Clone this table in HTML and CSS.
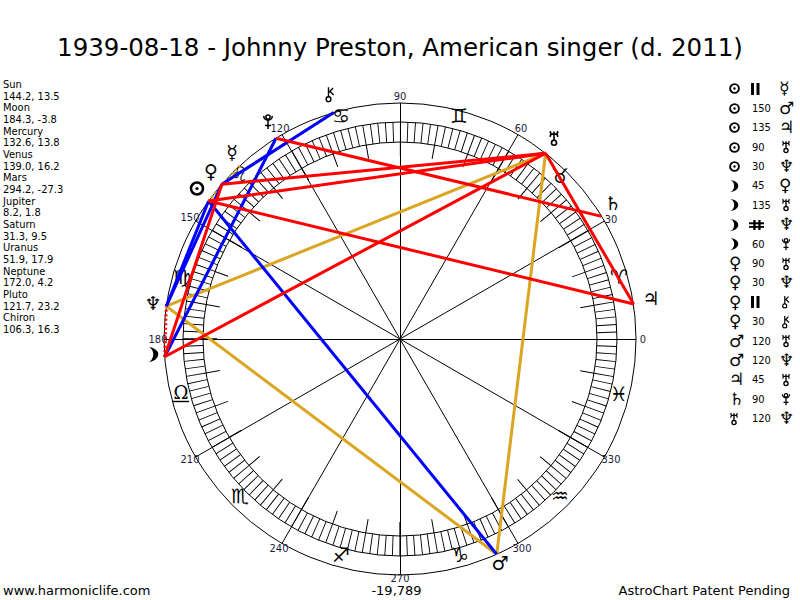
FILE: index.html
```html
<!DOCTYPE html>
<html>
<head>
<meta charset="utf-8">
<title>1939-08-18 - Johnny Preston</title>
<link rel="stylesheet" href="styles.css">
</head>
<body>
<div class="page">
  <h1 class="title">1939-08-18 - Johnny Preston, American singer (d. 2011)</h1>
  <div class="main">
    <div class="positions">
      <div>Sun</div><div>144.2, 13.5</div>
      <div>Moon</div><div>184.3, -3.8</div>
      <div>Mercury</div><div>132.6, 13.8</div>
      <div>Venus</div><div>139.0, 16.2</div>
      <div>Mars</div><div>294.2, -27.3</div>
      <div>Jupiter</div><div>8.2, 1.8</div>
      <div>Saturn</div><div>31.3, 9.5</div>
      <div>Uranus</div><div>51.9, 17.9</div>
      <div>Neptune</div><div>172.0, 4.2</div>
      <div>Pluto</div><div>121.7, 23.2</div>
      <div>Chiron</div><div>106.3, 16.3</div>
    </div>

    <svg class="chart" viewBox="140 70 530 514" width="530" height="514" xmlns="http://www.w3.org/2000/svg">
      <defs>
        <symbol id="sun" viewBox="0 0 14 14">
          <circle cx="7" cy="7" r="5.6" fill="none" stroke="#000" stroke-width="2.4"/>
          <circle cx="7" cy="7" r="1.5" fill="#000"/>
        </symbol>
        <symbol id="moon" viewBox="0 0 11 16">
          <path d="M0.5 1 A10 7 0 0 1 0.5 15 A5.2 7 0 0 0 0.5 1 Z" fill="#000"/>
        </symbol>
        <symbol id="uranus" viewBox="0 0 12 16">
          <g fill="none" stroke="#000" stroke-width="1.6">
            <path d="M2 0.8 Q3.8 3.6 2 6.4 M10 0.8 Q8.2 3.6 10 6.4 M2.8 3.6 H9.2 M6 1 V9.8"/>
            <circle cx="6" cy="12.3" r="2.5"/>
          </g>
        </symbol>
        <symbol id="pluto" viewBox="0 0 12 16">
          <g fill="none" stroke="#000" stroke-width="1.5">
            <circle cx="6" cy="3.6" r="2.1"/>
            <path d="M1.7 2.4 A4.3 4.3 0 0 0 10.3 2.4"/>
            <path d="M6 6.7 V15.6 M3 12 H9"/>
          </g>
        </symbol>
        <symbol id="chiron" viewBox="0 0 12 16">
          <g fill="none" stroke="#000" stroke-width="1.4">
            <circle cx="4.5" cy="12.7" r="2.4"/>
            <path d="M4.5 10.3 V0.8 M4.5 6.2 L9 1.6 M5.9 4.8 L9.6 8.6"/>
          </g>
        </symbol>
      </defs>

      <!-- rings -->
      <g class="ring">
        <circle cx="400" cy="339" r="236"/>
        <circle cx="400" cy="339" r="217"/>
        <circle cx="400" cy="339" r="197"/>
      </g>
      <circle class="ticks" cx="400" cy="339" r="207"/>
      <circle class="ticks10" cx="400" cy="339" r="190"/>

      <!-- 30 degree spokes -->
      <g class="spokes">
        <line x1="164" y1="339.5" x2="636" y2="339.5"/>
        <line x1="400.5" y1="103" x2="400.5" y2="575"/>
        <line x1="195.6" y1="457" x2="604.4" y2="221"/>
        <line x1="282" y1="543.4" x2="518" y2="134.6"/>
        <line x1="282" y1="134.6" x2="518" y2="543.4"/>
        <line x1="195.6" y1="221" x2="604.4" y2="457"/>
      </g>

      <!-- degree labels -->
      <g class="deg">
        <text x="643" y="339">0</text>
        <text x="611" y="219">30</text>
        <text x="521" y="128">60</text>
        <text x="400" y="96">90</text>
        <text x="280" y="128">120</text>
        <text x="190" y="217">150</text>
        <text x="158" y="339">180</text>
        <text x="190" y="459">210</text>
        <text x="279" y="548">240</text>
        <text x="400" y="578">270</text>
        <text x="522" y="548">300</text>
        <text x="611" y="459">330</text>
      </g>

      <!-- zodiac signs -->
      <g class="signs">
        <text x="619" y="277">♈&#xFE0E;</text>
        <text x="560" y="176">♉&#xFE0E;</text>
        <text x="459" y="116">♊&#xFE0E;</text>
        <text x="341" y="116">♋&#xFE0E;</text>
        <text x="239" y="174">♌&#xFE0E;</text>
        <text x="182" y="277">♍&#xFE0E;</text>
        <text class="libra" x="181" y="392">Ω</text>
        <text x="240" y="496">♏&#xFE0E;</text>
        <text x="341" y="555">♐&#xFE0E;</text>
        <text x="460" y="555">♑&#xFE0E;</text>
        <text x="560" y="496">♒&#xFE0E;</text>
        <text x="619" y="394">♓&#xFE0E;</text>
      </g>
      <line class="libra-bar" x1="173" y1="401.5" x2="189" y2="401.5"/>

      <!-- parallel / contra-parallel (dotted) -->
      <g class="dot">
        <line class="gold" x1="208.6" y1="201" x2="240.3" y2="165.3"/>
        <line class="gold" x1="221.9" y1="184.2" x2="333.8" y2="112.5"/>
        <line class="red" x1="164.7" y1="356.7" x2="166.3" y2="306.2"/>
      </g>

      <!-- aspect lines -->
      <g class="asp">
        <line class="gold" x1="496.7" y1="554.3" x2="545.6" y2="153.3"/>
        <line class="gold" x1="496.7" y1="554.3" x2="166.3" y2="306.2"/>
        <line class="gold" x1="545.6" y1="153.3" x2="166.3" y2="306.2"/>

        <line class="blue" x1="208.6" y1="201" x2="496.7" y2="554.3"/>
        <line class="blue" x1="208.6" y1="201" x2="166.3" y2="306.2"/>
        <line class="blue" x1="164.7" y1="356.7" x2="276" y2="138.2"/>
        <line class="blue" x1="221.9" y1="184.2" x2="166.3" y2="306.2"/>
        <line class="blue" x1="221.9" y1="184.2" x2="333.8" y2="112.5"/>

        <line class="red" x1="208.6" y1="201" x2="633.6" y2="304"/>
        <line class="red" x1="208.6" y1="201" x2="545.6" y2="153.3"/>
        <line class="red" x1="164.7" y1="356.7" x2="221.9" y2="184.2"/>
        <line class="red" x1="164.7" y1="356.7" x2="545.6" y2="153.3"/>
        <line class="red" x1="221.9" y1="184.2" x2="545.6" y2="153.3"/>
        <line class="red" x1="633.6" y1="304" x2="545.6" y2="153.3"/>
        <line class="red" x1="601.6" y1="216.4" x2="276" y2="138.2"/>
      </g>

      <!-- planets -->
      <use href="#sun" x="189" y="181" width="16" height="15"/>
      <use href="#moon" x="147" y="346" width="12" height="17"/>
      <use href="#uranus" x="548" y="130" width="12" height="17"/>
      <use href="#pluto" x="262" y="113" width="12" height="17"/>
      <use href="#chiron" x="324" y="86" width="12" height="17"/>
      <g class="planets">
        <text x="211" y="171">♀</text>
        <text x="232" y="152">☿</text>
        <text x="651" y="298">♃</text>
        <text x="613" y="203">♄</text>
        <text x="500" y="563">♂</text>
        <text x="153" y="303">♆</text>
      </g>
    </svg>

    <div class="aspects">
      <div class="row"><span class="g1"><svg class="sunic" viewBox="0 0 14 14"><use href="#sun"/></svg></span><span class="num"><svg class="par" viewBox="0 0 9 12"><rect x="0" y="0" width="3" height="12"/><rect x="5.5" y="0" width="3" height="12"/></svg></span><span class="g2">☿</span></div>
      <div class="row"><span class="g1"><svg class="sunic" viewBox="0 0 14 14"><use href="#sun"/></svg></span><span class="num">150</span><span class="g2">♂</span></div>
      <div class="row"><span class="g1"><svg class="sunic" viewBox="0 0 14 14"><use href="#sun"/></svg></span><span class="num">135</span><span class="g2">♃</span></div>
      <div class="row"><span class="g1"><svg class="sunic" viewBox="0 0 14 14"><use href="#sun"/></svg></span><span class="num">90</span><span class="g2"><svg class="sym" viewBox="0 0 12 16"><use href="#uranus"/></svg></span></div>
      <div class="row"><span class="g1"><svg class="sunic" viewBox="0 0 14 14"><use href="#sun"/></svg></span><span class="num">30</span><span class="g2">♆</span></div>
      <div class="row"><span class="g1"><svg class="moonic" viewBox="0 0 11 16"><use href="#moon"/></svg></span><span class="num">45</span><span class="g2">♀</span></div>
      <div class="row"><span class="g1"><svg class="moonic" viewBox="0 0 11 16"><use href="#moon"/></svg></span><span class="num">135</span><span class="g2"><svg class="sym" viewBox="0 0 12 16"><use href="#uranus"/></svg></span></div>
      <div class="row"><span class="g1"><svg class="moonic" viewBox="0 0 11 16"><use href="#moon"/></svg></span><span class="num"><svg class="cpar" viewBox="0 0 15 10"><rect x="4.3" y="0" width="2.3" height="10"/><rect x="9.3" y="0" width="2.3" height="10"/><rect x="0" y="2.3" width="15" height="2"/><rect x="0" y="6" width="15" height="1.8"/></svg></span><span class="g2">♆</span></div>
      <div class="row"><span class="g1"><svg class="moonic" viewBox="0 0 11 16"><use href="#moon"/></svg></span><span class="num">60</span><span class="g2"><svg class="sym" viewBox="0 0 12 16"><use href="#pluto"/></svg></span></div>
      <div class="row"><span class="g1">♀</span><span class="num">90</span><span class="g2"><svg class="sym" viewBox="0 0 12 16"><use href="#uranus"/></svg></span></div>
      <div class="row"><span class="g1">♀</span><span class="num">30</span><span class="g2">♆</span></div>
      <div class="row"><span class="g1">♀</span><span class="num"><svg class="par" viewBox="0 0 9 12"><rect x="0" y="0" width="3" height="12"/><rect x="5.5" y="0" width="3" height="12"/></svg></span><span class="g2"><svg class="sym" viewBox="0 0 12 16"><use href="#chiron"/></svg></span></div>
      <div class="row"><span class="g1">♀</span><span class="num">30</span><span class="g2"><svg class="sym" viewBox="0 0 12 16"><use href="#chiron"/></svg></span></div>
      <div class="row"><span class="g1">♂</span><span class="num">120</span><span class="g2"><svg class="sym" viewBox="0 0 12 16"><use href="#uranus"/></svg></span></div>
      <div class="row"><span class="g1">♂</span><span class="num">120</span><span class="g2">♆</span></div>
      <div class="row"><span class="g1">♃</span><span class="num">45</span><span class="g2"><svg class="sym" viewBox="0 0 12 16"><use href="#uranus"/></svg></span></div>
      <div class="row"><span class="g1">♄</span><span class="num">90</span><span class="g2"><svg class="sym" viewBox="0 0 12 16"><use href="#pluto"/></svg></span></div>
      <div class="row"><span class="g1"><svg class="sym first" viewBox="0 0 12 16"><use href="#uranus"/></svg></span><span class="num">120</span><span class="g2">♆</span></div>
    </div>
  </div>
  <div class="footer">
    <span class="f-left">www.harmoniclife.com</span>
    <span class="f-mid">-19,789</span>
    <span class="f-right">AstroChart Patent Pending</span>
  </div>
</div>
</body>
</html>
```

FILE: styles.css
```css
html, body {
  margin: 0;
  padding: 0;
  background: #ffffff;
}

.page {
  width: 800px;
  height: 600px;
  display: flex;
  flex-direction: column;
  font-family: "DejaVu Sans", Verdana, sans-serif;
  color: #000;
  overflow: hidden;
}

.title {
  margin: 0;
  height: 70px;
  box-sizing: border-box;
  padding-top: 33px;
  font-size: 24.5px;
  font-weight: normal;
  line-height: 30px;
  text-align: center;
  white-space: nowrap;
}

.main {
  display: flex;
  height: 514px;
}

.positions {
  width: 140px;
  flex: none;
  box-sizing: border-box;
  padding: 9px 0 0 3px;
  font-family: "DejaVu Sans Condensed", "Liberation Sans", sans-serif;
  font-size: 11px;
  line-height: 11.67px;
  white-space: nowrap;
}

.chart {
  display: block;
  flex: none;
  width: 530px;
  height: 514px;
  overflow: visible;
}

.ring circle {
  fill: none;
  stroke: #000;
  stroke-width: 1;
}

.ticks {
  fill: none;
  stroke: #000;
  stroke-width: 20;
  stroke-dasharray: 0.9 6.32566;
  stroke-dashoffset: 0.45;
}

.ticks10 {
  fill: none;
  stroke: #000;
  stroke-width: 14;
  stroke-dasharray: 1 32.16126;
  stroke-dashoffset: 0.5;
}

.spokes line {
  stroke: #000;
  stroke-width: 1;
}

.deg text {
  font-family: "DejaVu Sans Condensed", "DejaVu Sans", sans-serif;
  font-size: 11px;
  fill: #1c1c40;
  text-anchor: middle;
  dominant-baseline: central;
}

.signs text {
  font-family: "DejaVu Sans", sans-serif;
  font-size: 20px;
  fill: #000;
  text-anchor: middle;
  dominant-baseline: central;
}

.signs .libra {
  font-family: "DejaVu Serif", serif;
  font-size: 18px;
}

.libra-bar {
  stroke: #000;
  stroke-width: 1.4;
}

.planets text {
  font-family: "DejaVu Sans", sans-serif;
  font-size: 19px;
  fill: #000;
  text-anchor: middle;
  dominant-baseline: central;
}

.asp line {
  stroke-width: 3;
}

.dot line {
  stroke-width: 3;
  stroke-dasharray: 2 2.5;
}

.red { stroke: #ff0000; }
.blue { stroke: #0000ff; }
.gold { stroke: #daa520; }

.aspects {
  flex: 1;
  box-sizing: border-box;
  padding: 9.3px 0 0 59px;
}

.row {
  display: flex;
  align-items: center;
  height: 19.4px;
}

.g1 {
  display: flex;
  align-items: center;
  width: 23px;
  font-size: 17px;
  line-height: 19px;
}

.num {
  display: flex;
  align-items: center;
  width: 27px;
  font-family: "DejaVu Sans Condensed", "Liberation Sans", sans-serif;
  font-size: 11px;
  line-height: 19px;
}

.g2 {
  display: flex;
  align-items: center;
  font-size: 17px;
  line-height: 19px;
}

.sunic {
  width: 11px;
  height: 11px;
}

.moonic {
  width: 10px;
  height: 14px;
}

.par {
  width: 9px;
  height: 12px;
  margin-left: -1px;
  fill: #000;
}

.cpar {
  width: 15px;
  height: 10px;
  margin-left: -3px;
  fill: #000;
}

.sym {
  width: 10px;
  height: 14px;
  margin-left: 2px;
}

.sym.first {
  margin-left: 0;
}

.footer {
  display: grid;
  grid-template-columns: 1fr auto 1fr;
  height: 16px;
  padding: 0 10px 0 3px;
  font-size: 13px;
  line-height: 13px;
}

.f-left { text-align: left; }
.f-mid { text-align: center; }
.f-right { text-align: right; }
```
